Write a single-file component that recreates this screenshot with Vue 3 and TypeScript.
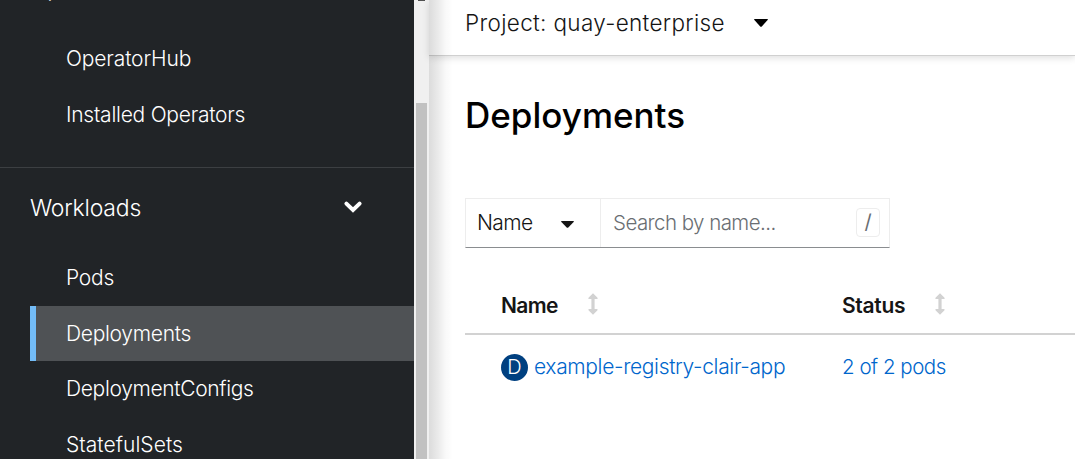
<script setup lang="ts">
interface NavItem { label: string; key: string; active?: boolean }

const operators: NavItem[] = [
  { label: 'OperatorHub', key: 'hub' },
  { label: 'Installed Operators', key: 'installed' },
]
const workloads: NavItem[] = [
  { label: 'Pods', key: 'pods' },
  { label: 'Deployments', key: 'deployments', active: true },
  { label: 'DeploymentConfigs', key: 'configs' },
  { label: 'StatefulSets', key: 'stateful' },
]
</script>

<template>
  <div class="app">
    <aside class="sidebar">
      <div class="section-title clipped">Operators</div>
      <nav class="list operators">
        <a v-for="item in operators" :key="item.key" class="item" :class="item.key">{{ item.label }}</a>
      </nav>
      <div class="divider"></div>
      <div class="section-title workloads">
        <span>Workloads</span>
        <svg class="chevron" width="20" height="14" viewBox="0 0 20 14">
          <path d="M3.4 3.6 L10 9.9 L16.6 3.6" fill="none" stroke="#fff" stroke-width="4" stroke-linecap="round" stroke-linejoin="miter" />
        </svg>
      </div>
      <nav class="list">
        <a v-for="item in workloads" :key="item.key" class="item" :class="[item.key, { active: item.active }]">{{ item.label }}</a>
      </nav>
    </aside>
    <div class="scrollbar">
      <div class="arrow"></div>
      <div class="thumb"></div>
    </div>
    <main class="main">
      <header class="project-bar">
        <span class="project">Project: quay-enterprise</span>
        <svg width="14" height="8" viewBox="0 0 14 8"><path d="M0.6 0H13.4Q14.3 0.2 13.6 1L7.8 7.4Q7 8.2 6.2 7.4L0.4 1Q-0.3 0.2 0.6 0Z" fill="#000" /></svg>
      </header>
      <section class="content">
        <h1>Deployments</h1>
        <div class="filter">
          <div class="select">
            <span>Name</span>
            <svg width="13" height="7" viewBox="0 0 13 7"><path d="M0.6 0H12.4Q13.3 0.2 12.6 1L7.3 6.5Q6.5 7.2 5.7 6.5L0.4 1Q-0.3 0.2 0.6 0Z" fill="#151515" /></svg>
          </div>
          <div class="search">
            <span class="placeholder">Search by name...</span>
            <kbd>/</kbd>
          </div>
        </div>
        <div class="table">
          <div class="row head">
            <div class="cell">
              <span class="th-name">Name</span>
              <svg class="sort" width="10" height="22" viewBox="0 0 10 22"><path d="M5 0.3L9.3 4.6Q10.2 6 8.8 6H6.6V16H8.8Q10.2 16 9.3 17.4L5 21.7L0.7 17.4Q-0.2 16 1.2 16H3.4V6H1.2Q-0.2 6 0.7 4.6Z" fill="#d2d2d2" /></svg>
            </div>
            <div class="cell">
              <span class="th-status">Status</span>
              <svg class="sort" width="10" height="22" viewBox="0 0 10 22"><path d="M5 0.3L9.3 4.6Q10.2 6 8.8 6H6.6V16H8.8Q10.2 16 9.3 17.4L5 21.7L0.7 17.4Q-0.2 16 1.2 16H3.4V6H1.2Q-0.2 6 0.7 4.6Z" fill="#d2d2d2" /></svg>
            </div>
          </div>
          <div class="row body">
            <div class="cell">
              <span class="badge">D</span>
              <a class="name">example-registry-clair-app</a>
            </div>
            <div class="cell"><a class="pods-link">2 of 2 pods</a></div>
          </div>
        </div>
      </section>
      <div class="side-shadow"></div>
    </main>
  </div>
</template>

<style>
body { margin: 0; overflow: hidden; }
</style>

<style scoped>
.app {
  display: flex;
  width: 1075px;
  height: 459px;
  overflow: hidden;
  background: #fff;
  font-family: Inter, "Liberation Sans", sans-serif;
  font-size: 21px;
  font-weight: 350;
  color: #151515;
  white-space: nowrap;
}
.app * { box-sizing: border-box; }
svg { display: block; flex: none; }

.sidebar { display: flow-root; width: 414px; flex: none; background: #212427; color: #fff; overflow: hidden; }
.section-title { display: flex; align-items: center; padding-left: 30px; font-size: 23px; letter-spacing: -0.2px; }
.clipped { height: 56px; margin-top: -40px; line-height: 56px; margin-bottom: 15px; }
.item { display: block; height: 55.5px; line-height: 55.5px; margin-left: 30px; padding-left: 36px; letter-spacing: -0.25px; }
.divider { height: 1px; margin-top: 25px; background: #3c3f42; }
.workloads { height: 56px; margin: 12px 0 14px; }
.chevron { margin-left: 202px; margin-top: -2px; }
.item.active { height: 55px; background: #4f5255; border-left: 6px solid #73bcf7; padding-left: 30px; }
.item.hub { letter-spacing: -0.14px; }
.item.pods { height: 56px; }
.item.stateful { letter-spacing: 0.05px; }
.item.deployments { letter-spacing: -0.3px; }
.item.configs { letter-spacing: -0.34px; }

.scrollbar { width: 15px; flex: none; background: #f0f0f0; }
.arrow { width: 7px; height: 1px; margin-left: 4px; background: #505050; }
.thumb { width: 11px; height: 356px; margin: 102px 0 0 2px; background: #c1c1c1; }

.main { position: relative; flex: 1; min-width: 0; background: #fff; }
.project-bar {
  display: flex;
  align-items: center;
  height: 56px;
  padding: 0 0 10px 36px;
  border-bottom: 1px solid #d0d0d0;
  box-shadow: 0 2px 7px rgba(3, 3, 3, 0.13);
  font-size: 22.5px;
}
.project { width: 289px; letter-spacing: 0.33px; }
.content { padding-left: 36px; }
h1 { margin: 34px 0 0; height: 50px; line-height: 50px; font-size: 35px; font-weight: 500; color: #000; letter-spacing: 0; }
.filter { display: flex; width: 425px; height: 50px; margin-top: 58px; border: 1px solid #ededed; border-bottom-color: #8a8d90; }
.select { display: flex; align-items: center; justify-content: space-between; width: 135px; padding: 0 26px 2px 11px; border-right: 1px solid #ededed; letter-spacing: -0.6px; }
.select svg { margin-top: 5px; }
.search { display: flex; flex: 1; align-items: center; justify-content: space-between; padding: 0 9px 2px 12px; }
.placeholder { color: #6a6e73; font-size: 20.5px; letter-spacing: -0.56px; }
kbd { width: 24px; height: 29px; border: 1px solid #ededed; border-radius: 4px; color: #6a6e73; font: 400 20px/27px Inter, sans-serif; text-align: center; }
.table { margin-top: 29px; }
.row { display: flex; padding-left: 36px; }
.cell { display: flex; flex: none; align-items: center; width: 341px; }
.head { height: 58px; border-bottom: 2px solid #d2d2d2; font-weight: 600; }
.th-name { width: 87px; letter-spacing: -0.6px; }
.th-status { width: 93px; letter-spacing: -0.3px; }
.sort { margin-top: -2px; }
.body { height: 64px; color: #06c; }
.badge { width: 27px; height: 27px; margin-right: 6px; border-radius: 50%; background: #004080; color: #fff; font-size: 20px; line-height: 26px; text-align: center; }
.name { margin-top: -2px; letter-spacing: -0.35px; }
.pods-link { margin-top: -2px; font-size: 20.5px; letter-spacing: -0.48px; }
.side-shadow {
  position: absolute;
  inset: 0 auto 0 0;
  width: 24px;
  background: linear-gradient(to right, rgba(3, 3, 3, 0.14), rgba(3, 3, 3, 0.085) 35%, rgba(3, 3, 3, 0.025) 70%, transparent);
}
</style>
